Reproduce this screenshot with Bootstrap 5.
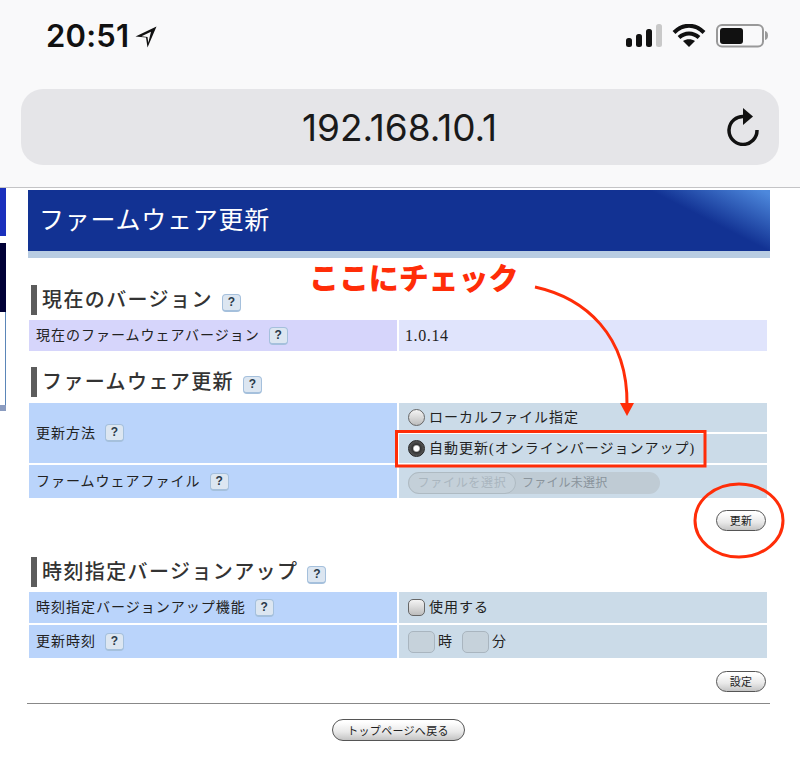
<!DOCTYPE html>
<html lang="ja">
<head>
<meta charset="utf-8">
<title>ファームウェア更新</title>
<link href="https://cdn.jsdelivr.net/npm/bootstrap@5.3.0/dist/css/bootstrap.min.css" rel="stylesheet">
<style>
html,body{height:758px;overflow:hidden}
body{background:#fff;font-family:"Liberation Serif","Noto Sans CJK JP",serif;color:#222;position:relative;width:800px}
.ios-top{height:188px;background:#f9f9fa;border-bottom:1px solid #c4c4c6;padding:0 21px}
.status-row{height:89px;padding:24px 9px 0 25px;align-items:flex-start}
.clock{font:600 31px/23px Inter,"Liberation Sans",sans-serif;color:#111;letter-spacing:.2px}
.loc-ico{margin:2px 0 0 6px}
.url-pill{height:76px;background:#e5e5e8;border-radius:22px;padding:0 19px 0 0;position:relative}
.url-text{font:400 37px/1 Inter,"Liberation Sans",sans-serif;color:#1a1a1a;letter-spacing:-.05px;flex:1;text-align:center;padding-left:52px;margin-top:1px}
.strip{width:6px;flex:none}
.strip-a{height:48px;background:#1a30bd}
.strip-gap{height:7px}
.strip-b{height:69px;background:#000036}
.strip-c{height:93px;border-right:1px solid #5b86b8}
.strip-d{height:6px;background:#8b9cc0}
.main-col{width:742px;margin-left:22px}
.hero{margin-top:2px;height:68px;border-bottom:7px solid #b8cce2;background:linear-gradient(27deg,#123293 86%,#4d88dc 99%);padding-left:11px;font-size:25px;letter-spacing:.75px;line-height:61px;color:#fff}
.sec-head{margin-left:3px;border-left:6px solid #5c5c5c;padding-left:5px;height:30px;font-size:20px;font-weight:500;letter-spacing:1.4px;line-height:30px;color:#333;white-space:nowrap}
.sec-1{margin-top:27px}.sec-2{margin-top:16px}.sec-3{margin-top:26px}
.spec{margin:5px 0 0 1px;width:738px;display:grid;grid-template-columns:368px 368px;gap:2px;font-size:14px;letter-spacing:1px}
.spec-2{margin-top:6px}
.lab,.val{display:flex;align-items:center;white-space:nowrap}
.lab{background:#bad4fb;padding-left:7px}
.val{background:#cbdbe8;padding-left:9px}
.lab-v{background:#d6d5fb}
.val-v{background:#e0e4fc;padding-left:6px;font-size:16px;letter-spacing:.6px}
.h29{height:29px}.h31{height:31px}.h33{height:33px}
.span2{grid-row:span 2}
.qm{display:inline-block;width:19px;height:18px;margin-left:9px;border:1px solid #a5c0dc;border-bottom-width:2px;border-radius:4px;background:#dce6f1;font:700 12px/15px "Liberation Sans",sans-serif;color:#2a3a4a;text-align:center;letter-spacing:0;vertical-align:2px}
.sec-head .qm{margin-left:9px;vertical-align:1px}
.opt{width:17px;height:17px;margin:0 4px 0 0;appearance:none;flex:none;border:1px solid #666;background:linear-gradient(#f4f4f4,#bdbdbd)}
.opt-round{border-radius:50%}
.opt-on{border-color:#222;background:radial-gradient(circle,#fff 0 2.500px,#333 4px,#5c5c5c 8px)}
.opt-sq{border-radius:5px}
.file-box{width:252px;height:22px;background:#bfcbd4;border-radius:11px;font-size:12px;letter-spacing:.2px;color:#8a949c;margin-top:2px}
.file-btn{width:108px;height:22px;border:1px solid #aebac2;border-radius:11px;background:#c4d0d9;color:#aab6bf;text-align:center;line-height:20px;padding:0;margin-right:6px;font-size:12px;letter-spacing:.7px}
.num-box{width:27px;height:22px;border:1px solid #a9b5bf;border-radius:5px;background:#c6d2db;margin-right:3px;flex:none}
.unit{margin-right:9px}
.pill-btn{--bs-btn-padding-y:0;--bs-btn-padding-x:0;--bs-btn-font-size:11px;--bs-btn-line-height:19px;--bs-btn-color:#222;--bs-btn-border-color:#555;--bs-btn-border-radius:11px;--bs-btn-hover-color:#222;--bs-btn-hover-border-color:#555;height:21px;width:50px;background:linear-gradient(#fff 10%,#e8e8e8 60%,#c4c4c4);font-family:"Noto Sans CJK JP",sans-serif;letter-spacing:.3px}
.btn-end{padding-right:4px}
.btn-end-1{margin-top:12px}.btn-end-2{margin-top:13px}
.rule{margin:11px 0 0 -1px;width:743px;border-top:1px solid #888;opacity:1}
.back-row{margin-top:15px;padding-right:2px}
.back-btn{width:133px;height:22px}
.notes{position:absolute;left:0;top:0;width:800px;height:758px;pointer-events:none}
.call-out{position:absolute;left:309px;top:258px;font:900 30px/36px "Noto Sans CJK JP",sans-serif;letter-spacing:-.1px;color:#ff2d08;white-space:nowrap}
</style>
</head>
<body>
<header class="ios-top">
  <div class="status-row d-flex justify-content-between">
    <div class="d-flex align-items-start">
      <span class="clock">20:51</span>
      <svg class="loc-ico" width="22" height="22" viewBox="0 0 22 22"><path d="M21.500 .5 .5 10.500l10.500 1 1.500 10z" fill="#111"/><path d="M16 5.800 6.500 10.300l6 .7.8 5.800z" fill="#f9f9fa"/></svg>
    </div>
    <svg width="144" height="24" viewBox="627 24 144 24">
      <rect x="627" y="38" width="6" height="9" rx="2.500" fill="#111"/>
      <rect x="637" y="34" width="6" height="13" rx="2.500" fill="#111"/>
      <rect x="647" y="29" width="6" height="18" rx="2.500" fill="#111"/>
      <rect x="657" y="24" width="6" height="23" rx="2.500" fill="#c9c9c9"/>
      <path d="M675 32.500c9-9 21-9 30 0M680 37.500c6-5.500 14-5.500 20 0" fill="none" stroke="#111" stroke-width="4"/>
      <path d="M684 41c3.500-2.500 8.500-2.500 12 0l-6 6z" fill="#111"/>
      <rect x="718" y="25" width="46" height="21.500" rx="5" fill="none" stroke="#999" stroke-width="2"/>
      <rect x="721" y="28" width="23" height="16" rx="3" fill="#111"/>
      <path d="M766 31c2 .5 3 2 3 4.500s-1 4-3 4.500z" fill="#999"/>
    </svg>
  </div>
  <div class="url-pill d-flex align-items-center">
    <span class="url-text">192.168.10.1</span>
    <svg width="34" height="38" viewBox="0 0 34 38"><path d="M18.500 8.500A14 14 0 1 0 31 22" fill="none" stroke="#111" stroke-width="3.500"/><path d="M17 0l10 8.500L17 17z" fill="#111"/></svg>
  </div>
</header>
<div class="d-flex">
  <div class="strip">
    <div class="strip-a"></div><div class="strip-gap"></div><div class="strip-b"></div><div class="strip-c"></div><div class="strip-d"></div>
  </div>
  <main class="main-col">
    <div class="hero">ファームウェア更新</div>

    <div class="sec-head sec-1">現在のバージョン<span class="qm">?</span></div>
    <div class="spec">
      <div class="lab lab-v h31">現在のファームウェアバージョン<span class="qm">?</span></div>
      <div class="val val-v h31">1.0.14</div>
    </div>

    <div class="sec-head sec-2">ファームウェア更新<span class="qm">?</span></div>
    <div class="spec spec-2">
      <div class="lab span2">更新方法<span class="qm">?</span></div>
      <div class="val h29"><input class="opt opt-round" type="radio" name="m">ローカルファイル指定</div>
      <div class="val h29"><input class="opt opt-round opt-on" type="radio" name="m">自動更新(オンラインバージョンアップ)</div>
      <div class="lab h33">ファームウェアファイル<span class="qm">?</span></div>
      <div class="val h33"><div class="file-box d-flex align-items-center"><span class="file-btn">ファイルを選択</span>ファイル未選択</div></div>
    </div>
    <div class="btn-end btn-end-1 d-flex justify-content-end"><button type="button" class="btn pill-btn">更新</button></div>

    <div class="sec-head sec-3">時刻指定バージョンアップ<span class="qm">?</span></div>
    <div class="spec">
      <div class="lab h31">時刻指定バージョンアップ機能<span class="qm">?</span></div>
      <div class="val h31"><input class="opt opt-sq" type="checkbox">使用する</div>
      <div class="lab h33">更新時刻<span class="qm">?</span></div>
      <div class="val h33"><span class="num-box"></span><span class="unit">時</span><span class="num-box"></span><span>分</span></div>
    </div>
    <div class="btn-end btn-end-2 d-flex justify-content-end"><button type="button" class="btn pill-btn">設定</button></div>

    <hr class="rule">
    <div class="back-row d-flex justify-content-center"><button type="button" class="btn pill-btn back-btn">トップページへ戻る</button></div>
  </main>
</div>
<div class="call-out">ここにチェック</div>
<svg class="notes" viewBox="0 0 800 758">
  <path d="M535 287C585 298 628 335 627 405" fill="none" stroke="#ff2d08" stroke-width="3"/>
  <path d="M620 403h14l-7 13z" fill="#ff2d08"/>
  <rect x="396.500" y="431.500" width="308.500" height="34.500" fill="none" stroke="#ff2d08" stroke-width="3"/>
  <ellipse cx="739" cy="520.500" rx="44" ry="36.500" fill="none" stroke="#ff2d08" stroke-width="3"/>
</svg>
</body>
</html>
